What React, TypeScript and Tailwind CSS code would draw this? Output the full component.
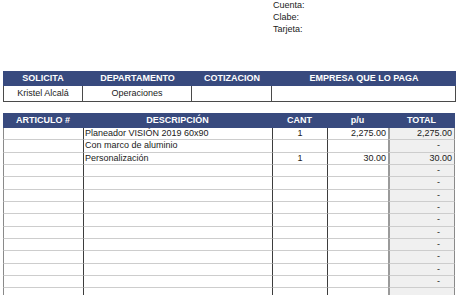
import React from "react";

type Line = { desc: string; cant: string; pu: string; total: string };

const lines: Line[] = [
  { desc: "Planeador VISIÓN 2019 60x90", cant: "1", pu: "2,275.00", total: "2,275.00" },
  { desc: "Con marco de aluminio", cant: "", pu: "", total: "-" },
  { desc: "Personalización", cant: "1", pu: "30.00", total: "30.00" },
];
const blankCount = 10;

export default function App() {
  const rows: Line[] = [
    ...lines,
    ...Array.from({ length: blankCount }, () => ({ desc: "", cant: "", pu: "", total: "-" })),
    { desc: "", cant: "", pu: "", total: "" },
  ];

  return (
    <div
      className="w-[460px] h-[295px] overflow-hidden bg-white text-[#1a1a1a]"
      style={{ fontFamily: '"Liberation Sans", Arial, sans-serif' }}
    >
      {/* Payment details */}
      <div className="pl-[273px] text-[9px] leading-[12px] -mt-[1px]">
        <div>Cuenta:</div>
        <div>Clabe:</div>
        <div>Tarjeta:</div>
      </div>

      {/* Request summary */}
      <div className="ml-[3px] mt-[36px] w-[453px]">
        <div className="flex h-[15px] bg-[#384a7e] text-white font-bold text-[9px] leading-[15px] text-center">
          <div className="w-[80px]">SOLICITA</div>
          <div className="w-[109px]">DEPARTAMENTO</div>
          <div className="w-[80px]">COTIZACION</div>
          <div className="flex-1">EMPRESA QUE LO PAGA</div>
        </div>
        <div className="flex h-[16px] text-[9px] leading-[15px] text-center border border-t-0 border-[#4a4a4a]">
          <div className="w-[79px] border-r border-[#4a4a4a]">Kristel Alcalá</div>
          <div className="w-[109px] border-r border-[#4a4a4a]">Operaciones</div>
          <div className="w-[80px] border-r border-[#4a4a4a]"></div>
          <div className="flex-1"></div>
        </div>
      </div>

      {/* Items */}
      <div className="ml-[3px] mt-[11px] w-[452px]">
        <div className="flex h-[15px] bg-[#384a7e] text-white font-bold text-[9px] leading-[15px] text-center">
          <div className="w-[80px]">ARTICULO #</div>
          <div className="w-[189px]">DESCRIPCIÓN</div>
          <div className="w-[55px]">CANT</div>
          <div className="w-[61px]">p/u</div>
          <div className="flex-1">TOTAL</div>
        </div>
        {rows.map((r, i) => (
          <div key={i} className="flex h-[12.33px] text-[9px] leading-[11px]">
            <div className="w-[80px] border-l border-l-[#8a8a8a] border-b border-b-[#cdcdcd]"></div>
            <div className="w-[189px] border-l border-l-[#3d3d3d] border-b border-b-[#cdcdcd] pl-[1px] whitespace-nowrap overflow-hidden">
              {r.desc}
            </div>
            <div className="w-[55px] border-l border-l-[#3d3d3d] border-b border-b-[#cdcdcd] text-center">
              {r.cant}
            </div>
            <div className="w-[61px] border-l border-l-[#3d3d3d] border-b border-b-[#cdcdcd] text-right pr-[2px]">
              {r.pu}
            </div>
            <div
              className={`flex-1 bg-[#f0f0f0] border-l-2 border-l-[#9a9a9a] border-r border-r-[#8a8a8a] border-b border-b-[#cdcdcd] text-right ${
                r.total === "-" ? "pr-[14px]" : "pr-[2px]"
              }`}
            >
              {r.total}
            </div>
          </div>
        ))}
      </div>
    </div>
  );
}
